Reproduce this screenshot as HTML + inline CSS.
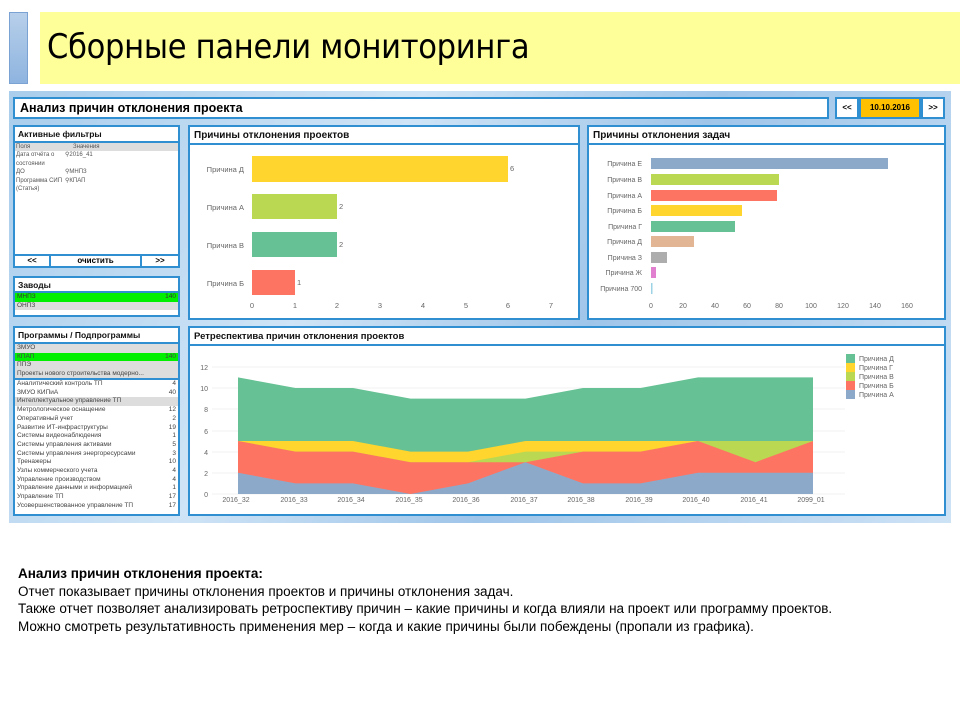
<!DOCTYPE html>
<html><head><meta charset="utf-8"><style>
*{margin:0;padding:0;box-sizing:border-box}
body{width:960px;height:720px;background:#fff;font-family:"Liberation Sans",sans-serif;position:relative;overflow:hidden}
.a{position:absolute}
.p{position:absolute;background:#fff;border:2px solid #2f8fd0}
.ph{height:18px;border-bottom:2px solid #2f8fd0;font-weight:bold;font-size:10px;padding:3px 4px;color:#111}
.t{font-size:7px;color:#555;line-height:8.5px}
.row{display:flex;justify-content:space-between;padding:0 2px;font-size:6.5px;height:8.7px;line-height:8.7px;color:#444}
</style></head><body>
<div class="a" style="left:9px;top:12px;width:19px;height:72px;background:linear-gradient(#b7cfea,#8eb4df);border:1px solid #7aa3d4"></div>
<div class="a" style="left:40px;top:12px;width:920px;height:72px;background:#ffff99"></div>
<div class="a" style="left:47px;top:27px;font-size:34px;font-family:'DejaVu Sans Condensed','Liberation Sans Narrow','Liberation Sans',sans-serif;letter-spacing:-0.3px;color:#000">Сборные панели мониторинга</div>

<div class="a" style="left:9px;top:91px;width:942px;height:432px;background:linear-gradient(120deg,#a9cdec,#cfe4f6 35%,#9fc5e9 60%,#cde2f5)"></div>
<div class="p" style="left:13px;top:97px;width:816px;height:22px;padding:2px 5px;font-weight:bold;font-size:12.5px">Анализ причин отклонения проекта</div>
<div class="p" style="left:835px;top:97px;width:24px;height:22px;font-size:8px;font-weight:bold;text-align:center;line-height:18px">&lt;&lt;</div>
<div class="p" style="left:859px;top:97px;width:62px;height:22px;background:#ffc000;font-size:8px;font-weight:bold;text-align:center;line-height:18px">10.10.2016</div>
<div class="p" style="left:921px;top:97px;width:24px;height:22px;font-size:8px;font-weight:bold;text-align:center;line-height:18px">&gt;&gt;</div>

<div class="p" style="left:13px;top:125px;width:167px;height:143px">
<div class="ph" style="font-size:8.5px;height:16px;padding:2px 3px">Активные фильтры</div>
<div class="t" style="background:#ddd;display:flex;height:8px;font-size:6px"><span style="width:58px;padding-left:1px">Поля</span><span>Значения</span></div>
<div class="t" style="display:flex;font-size:6px"><span style="width:50px;padding-left:1px">Дата отчёта о состоянии</span><span>⚲2016_41</span></div>
<div class="t" style="display:flex;font-size:6px"><span style="width:50px;padding-left:1px">ДО</span><span>⚲МНПЗ</span></div>
<div class="t" style="display:flex;font-size:6px"><span style="width:50px;padding-left:1px">Программа СИП (Статья)</span><span>⚲КПАП</span></div>
<div class="a" style="left:0;top:127px;width:163px;height:12px;border-top:2px solid #2f8fd0;display:flex;font-size:8px;font-weight:bold;line-height:10px;text-align:center">
<span style="width:36px;border-right:2px solid #2f8fd0">&lt;&lt;</span><span style="flex:1;border-right:2px solid #2f8fd0">очистить</span><span style="width:36px">&gt;&gt;</span></div>
</div>

<div class="p" style="left:13px;top:276px;width:167px;height:41px">
<div class="ph" style="font-size:8.5px;height:15px;padding:2px 3px">Заводы</div>
<div class="row" style="background:#00f000;color:#333"><span>МНПЗ</span><span>140</span></div>
<div class="row" style="background:#ddd"><span>ОНПЗ</span></div>
</div>

<div class="p" style="left:13px;top:326px;width:167px;height:190px">
<div class="ph" style="font-size:8.5px;height:16px;padding:2px 3px">Программы / Подпрограммы</div>
<div class="row" style="background:#ddd"><span>ЗМУО</span></div>
<div class="row" style="background:#00f000"><span>КПАП</span><span>140</span></div>
<div class="row" style="background:#ddd"><span>ППЭ</span></div>
<div class="row" style="background:#ddd;border-bottom:2px solid #2f8fd0;height:10px"><span>Проекты нового строительства модерно...</span></div>
<div class="row"><span>Аналитический контроль ТП</span><span>4</span></div>
<div class="row"><span>ЗМУО КИПиА</span><span>40</span></div>
<div class="row" style="background:#ddd"><span>Интеллектуальное управление ТП</span></div>
<div class="row"><span>Метрологическое оснащение</span><span>12</span></div>
<div class="row"><span>Оперативный учет</span><span>2</span></div>
<div class="row"><span>Развитие ИТ-инфраструктуры</span><span>19</span></div>
<div class="row"><span>Системы видеонаблюдения</span><span>1</span></div>
<div class="row"><span>Системы управления активами</span><span>5</span></div>
<div class="row"><span>Системы управления энергоресурсами</span><span>3</span></div>
<div class="row"><span>Тренажеры</span><span>10</span></div>
<div class="row"><span>Узлы коммерческого учета</span><span>4</span></div>
<div class="row"><span>Управление производством</span><span>4</span></div>
<div class="row"><span>Управление данными и информацией</span><span>1</span></div>
<div class="row"><span>Управление ТП</span><span>17</span></div>
<div class="row"><span>Усовершенствованное управление ТП</span><span>17</span></div>
</div>

<div class="p" style="left:188px;top:125px;width:392px;height:195px"><div class="ph">Причины отклонения проектов</div></div>
<div class="p" style="left:587px;top:125px;width:359px;height:195px"><div class="ph">Причины отклонения задач</div></div>
<div class="p" style="left:188px;top:326px;width:758px;height:190px"><div class="ph" style="font-size:9.5px">Ретреспектива причин отклонения проектов</div></div>

<svg class="a" style="left:0;top:0" width="960" height="720" font-family="Liberation Sans,sans-serif" font-size="7.5" fill="#666">
<rect x="252" y="156" width="256" height="26" fill="#ffd52e"/>
<rect x="252" y="194" width="85" height="25" fill="#bad851"/>
<rect x="252" y="232" width="85" height="25" fill="#66c194"/>
<rect x="252" y="270" width="43" height="25" fill="#fe7462"/>
<g text-anchor="end"><text x="244" y="172">Причина Д</text><text x="244" y="210">Причина А</text><text x="244" y="248">Причина В</text><text x="244" y="286">Причина Б</text></g>
<text x="510" y="171">6</text><text x="339" y="209">2</text><text x="339" y="247">2</text><text x="297" y="285">1</text>
<g text-anchor="middle"><text x="252" y="308">0</text><text x="295" y="308">1</text><text x="337" y="308">2</text><text x="380" y="308">3</text><text x="423" y="308">4</text><text x="466" y="308">5</text><text x="508" y="308">6</text><text x="551" y="308">7</text></g>
<g>
<rect x="651" y="158" width="237" height="11" fill="#8da9ca"/>
<rect x="651" y="174" width="128" height="11" fill="#bad851"/>
<rect x="651" y="190" width="126" height="11" fill="#fe7462"/>
<rect x="651" y="205" width="91" height="11" fill="#ffd52e"/>
<rect x="651" y="221" width="84" height="11" fill="#66c194"/>
<rect x="651" y="236" width="43" height="11" fill="#e2b595"/>
<rect x="651" y="252" width="16" height="11" fill="#adadad"/>
<rect x="651" y="267" width="5" height="11" fill="#e280d0"/>
<rect x="651" y="283" width="1.5" height="11" fill="#9ed3e6"/>
</g>
<g text-anchor="end" font-size="7"><text x="642" y="166">Причина Е</text><text x="642" y="182">Причина В</text><text x="642" y="198">Причина А</text><text x="642" y="213">Причина Б</text><text x="642" y="229">Причина Г</text><text x="642" y="244">Причина Д</text><text x="642" y="260">Причина З</text><text x="642" y="275">Причина Ж</text><text x="642" y="291">Причина 700</text></g>
<g text-anchor="middle" font-size="7"><text x="651" y="308">0</text><text x="683" y="308">20</text><text x="715" y="308">40</text><text x="747" y="308">60</text><text x="779" y="308">80</text><text x="811" y="308">100</text><text x="843" y="308">120</text><text x="875" y="308">140</text><text x="907" y="308">160</text></g>
<g stroke="#eee" stroke-width="0.7"><line x1="212" x2="845" y1="367" y2="367"/><line x1="212" x2="845" y1="388" y2="388"/><line x1="212" x2="845" y1="409" y2="409"/><line x1="212" x2="845" y1="431" y2="431"/><line x1="212" x2="845" y1="452" y2="452"/><line x1="212" x2="845" y1="473" y2="473"/><line x1="212" x2="845" y1="494" y2="494"/></g>
<polygon fill="#66c194" points="238,494 238,377.4 295.5,388 353,388 410.5,398.6 468,398.6 525.5,398.6 583,388 640.5,388 698,377.4 755.5,377.4 813,377.4 813,494"/>
<polygon fill="#ffd52e" points="238,494 238,441 295.5,441 353,441 410.5,451.6 468,451.6 525.5,441 583,441 640.5,441 698,441 755.5,441 813,441 813,494"/>
<polygon fill="#bad851" points="238,494 238,441 295.5,451.6 353,451.6 410.5,462.2 468,462.2 525.5,451.6 583,451.6 640.5,451.6 698,441 755.5,441 813,441 813,494"/>
<polygon fill="#fe7462" points="238,494 238,441 295.5,451.6 353,451.6 410.5,462.2 468,462.2 525.5,462.2 583,451.6 640.5,451.6 698,441 755.5,462.2 813,441 813,494"/>
<polygon fill="#8da9ca" points="238,494 238,472.8 295.5,483.4 353,483.4 410.5,494 468,483.4 525.5,462.2 583,483.4 640.5,483.4 698,472.8 755.5,472.8 813,472.8 813,494"/>
<g text-anchor="end" font-size="7"><text x="208" y="370">12</text><text x="208" y="391">10</text><text x="208" y="412">8</text><text x="208" y="434">6</text><text x="208" y="455">4</text><text x="208" y="476">2</text><text x="208" y="497">0</text></g>
<g text-anchor="middle" font-size="7"><text x="236" y="502">2016_32</text><text x="294" y="502">2016_33</text><text x="351" y="502">2016_34</text><text x="409" y="502">2016_35</text><text x="466" y="502">2016_36</text><text x="524" y="502">2016_37</text><text x="581" y="502">2016_38</text><text x="639" y="502">2016_39</text><text x="696" y="502">2016_40</text><text x="754" y="502">2016_41</text><text x="811" y="502">2099_01</text></g>
<rect x="846" y="354" width="9" height="9" fill="#66c194"/><rect x="846" y="363" width="9" height="9" fill="#ffd52e"/><rect x="846" y="372" width="9" height="9" fill="#bad851"/><rect x="846" y="381" width="9" height="9" fill="#fe7462"/><rect x="846" y="390" width="9" height="9" fill="#8da9ca"/>
<g font-size="7"><text x="859" y="361">Причина Д</text><text x="859" y="370">Причина Г</text><text x="859" y="379">Причина В</text><text x="859" y="388">Причина Б</text><text x="859" y="397">Причина А</text></g>
</svg>

<div class="a" style="left:18px;top:565px;font-size:13.5px;line-height:17.6px;color:#000;white-space:nowrap;letter-spacing:0">
<b>Анализ причин отклонения проекта:</b><br>
Отчет показывает причины отклонения проектов и причины отклонения задач.<br>
Также отчет позволяет анализировать ретроспективу причин – какие причины и когда влияли на проект или программу проектов.<br>
Можно смотреть результативность применения мер – когда и какие причины были побеждены (пропали из графика).
</div>
</body></html>
